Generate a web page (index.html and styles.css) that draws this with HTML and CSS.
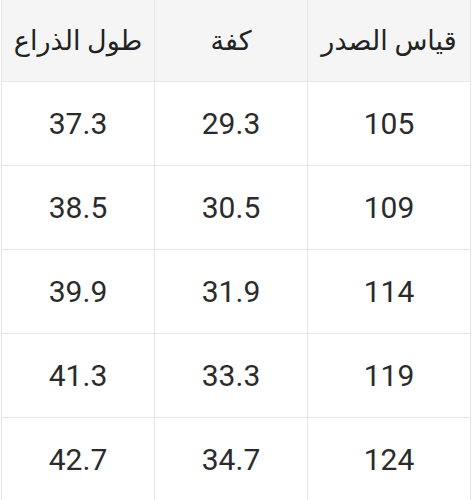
FILE: index.html
```html
<!DOCTYPE html>
<html lang="ar" dir="rtl">
<head>
<meta charset="utf-8">
<link rel="stylesheet" href="styles.css">
</head>
<body>
<table class="size-table">
  <colgroup>
    <col class="c1"><col class="c2"><col class="c3">
  </colgroup>
  <thead>
    <tr><th>قياس الصدر</th><th>كفة</th><th>طول الذراع</th></tr>
  </thead>
  <tbody>
    <tr><td>105</td><td>29.3</td><td>37.3</td></tr>
    <tr><td>109</td><td>30.5</td><td>38.5</td></tr>
    <tr><td>114</td><td>31.9</td><td>39.9</td></tr>
    <tr><td>119</td><td>33.3</td><td>41.3</td></tr>
    <tr><td>124</td><td>34.7</td><td>42.7</td></tr>
  </tbody>
</table>
</body>
</html>
```
FILE: styles.css
```css
html, body {
  margin: 0;
  padding: 0;
  background: #ffffff;
}
body {
  padding: 0 3px 0 3px;
  font-family: Roboto, "DejaVu Sans", sans-serif;
  color: #2b2b2b;
}
.size-table {
  border-collapse: collapse;
  table-layout: fixed;
  width: 469px;
}
.c1 { width: 163px; }
.c2 { width: 153px; }
.c3 { width: 153px; }
.size-table th,
.size-table td {
  border: 1px solid #e6e6e6;
  text-align: center;
  vertical-align: middle;
  padding: 0;
}
.size-table thead th {
  border-top: none;
  height: 81px;
  background: #f5f5f5;
  font-weight: 400;
  font-size: 27px;
  color: #222;
}
.size-table td {
  height: 83px;
  font-size: 30px;
}
```
